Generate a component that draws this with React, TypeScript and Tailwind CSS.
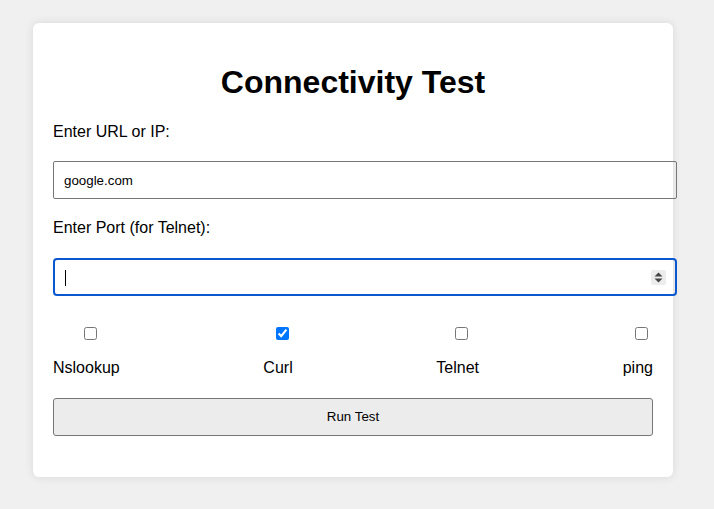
import React from "react";

const tests = [
    { name: "Nslookup", checked: false },
    { name: "Curl", checked: true },
    { name: "Telnet", checked: false },
    { name: "ping", checked: false },
];

export default function App() {
    return (
        <div className="min-h-[509px] w-full bg-[#f0f0f0] pt-[23px] font-['Liberation_Sans',Arial,sans-serif] text-black">
            <div className="ml-[33px] w-[640px] rounded-[6px] bg-white px-5 pt-5 pb-[41px] shadow-[0_0_10px_rgba(0,0,0,0.1)]">
                <h1 className="my-[21.44px] text-center text-[32px] font-bold leading-[37px]">Connectivity Test</h1>

                <label className="mb-5 block text-[16px] leading-[18.4px]">Enter URL or IP:</label>
                <input
                    type="text"
                    defaultValue="google.com"
                    className="mb-5 block h-[38px] w-[624px] rounded-[2px] border border-[#767676] px-[10px] text-[13.33px] outline-none"
                />

                <label className="mb-5 block text-[16px] leading-[18.4px]">Enter Port (for Telnet):</label>
                <div className="relative mb-5 h-[38px] w-[624px] rounded-[4px] border-2 border-[#0b57d0]">
                    <span className="absolute left-[10px] top-[10px] h-[16px] w-px bg-black" />
                    <span className="absolute right-[9px] top-[10px] flex h-[15px] w-[15px] items-center justify-center rounded-[2px] bg-[#ececec]">
                        <svg width="9" height="11" viewBox="0 0 9 11">
                            <path d="M4.5 0.5 L8.5 4.5 L0.5 4.5 Z" fill="#444" />
                            <path d="M4.5 10.5 L8.5 6.5 L0.5 6.5 Z" fill="#444" />
                        </svg>
                    </span>
                </div>

                <div className="flex justify-between">
                    {tests.map((t) => (
                        <label key={t.name} className="flex flex-col items-center">
                            <input
                                type="checkbox"
                                defaultChecked={t.checked}
                                className="m-0 mt-[11px] ml-2 h-[13px] w-[13px]"
                            />
                            <span className="mt-[19px] text-[16px] leading-[18.4px]">{t.name}</span>
                        </label>
                    ))}
                </div>

                <button className="mt-[21px] block h-[38px] w-full rounded-[3px] border border-[#767676] bg-[#ececec] text-[13.33px]">
                    Run Test
                </button>
            </div>
        </div>
    );
}
